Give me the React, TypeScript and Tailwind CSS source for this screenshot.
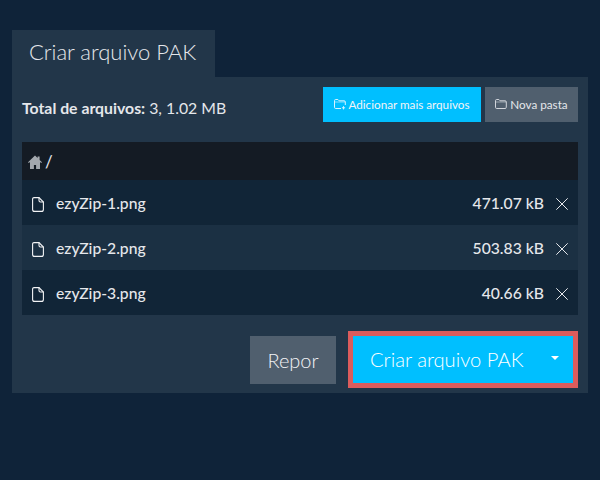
import React from "react";

const font = { fontFamily: "Lato, sans-serif" };

function FileIcon() {
  return (
    <svg width="12" height="15" viewBox="0 0 12 15" fill="none" stroke="#f3f4f6" strokeWidth="1.1" className="shrink-0">
      <path d="M2 0.6h5l4.4 4.4v7.4a2 2 0 0 1-2 2H2.6a2 2 0 0 1-2-2V2a1.4 1.4 0 0 1 1.4-1.4z" />
      <path d="M7 0.6v2.9a1.5 1.5 0 0 0 1.5 1.5h2.9" />
    </svg>
  );
}

function CloseIcon() {
  return (
    <svg width="12" height="12" viewBox="0 0 12 12" stroke="#e5e7eb" strokeWidth="1" fill="none" className="shrink-0">
      <path d="M0.3 0.3l11.4 11.4M11.7 0.3L0.3 11.7" />
    </svg>
  );
}

function FolderIcon({ plus, stroke }: { plus?: boolean; stroke: string }) {
  return (
    <svg width="12" height="11" viewBox="0 0 12 11" fill="none" stroke={stroke} strokeWidth="1" className="shrink-0">
      {plus ? (
        <path d="M7 9.5H1.7a1.2 1.2 0 0 1-1.2-1.2V1.7A1.2 1.2 0 0 1 1.7.5h2.2l1.2 1.3h5a1.2 1.2 0 0 1 1.2 1.2v3" />
      ) : (
        <path d="M1.7.5h2.2l1.2 1.3h5a1.2 1.2 0 0 1 1.2 1.2v5.3a1.2 1.2 0 0 1-1.2 1.2H1.7A1.2 1.2 0 0 1 .5 8.3V1.7A1.2 1.2 0 0 1 1.7.5z" />
      )}
      <path d="M.8 3h10.4" opacity="0.6" />
      {plus && <path d="M9.5 7.2v3.2M7.9 8.8h3.2" />}
    </svg>
  );
}

function HomeIcon() {
  return (
    <svg width="14" height="14" viewBox="0 0 14 14" fill="#a3a8ae" className="shrink-0">
      <path d="M7 0.5L0 7.2l.8.9L2 7.1V14h3.9v-4h2.2v4H12V7.1l1.2 1 .8-.9-2.4-2.3V1.5H9.6V3z" />
    </svg>
  );
}

function Row({ name, size, alt }: { name: string; size: string; alt?: boolean }) {
  return (
    <div className={`flex h-[45px] items-center pl-[10px] pr-[10px] pt-[3px] ${alt ? "bg-[#1b3043]" : "bg-[#112537]"}`}>
      <FileIcon />
      <span className="ml-[12px] flex-1 text-[15.7px] font-medium text-[#e5e7eb]">{name}</span>
      <span className="text-[15.7px] font-medium text-[#e5e7eb]">{size}</span>
      <span className="ml-[12px]"><CloseIcon /></span>
    </div>
  );
}

export default function App() {
  return (
    <div className="min-h-[480px] bg-[#0f2339] px-3 pt-[30px]" style={font}>
      <div className="flex h-[47px] w-[203px] items-center bg-[#223649] pb-[5px] pl-[17px] text-[22px] font-light text-[#e5e7eb]">
        Criar arquivo PAK
      </div>
      <div className="h-[316px] bg-[#223649] px-[10px]">
        <div className="flex h-[65px] items-start justify-between pt-[10px]">
          <div className="mt-[9px] text-[15.8px] text-[#e5e7eb]">
            <span className="font-bold">Total de arquivos:</span> 3, 1.02 MB
          </div>
          <div className="flex gap-1">
            <div className="flex h-[35px] w-[158px] items-center justify-center gap-[2px] bg-[#00bfff] text-[11.7px] text-[#f3f4f6]">
              <FolderIcon plus stroke="#d9f4ff" />
              Adicionar mais arquivos
            </div>
            <div className="flex h-[35px] w-[93px] items-center justify-center gap-[3px] bg-[#505f6e] text-[11.7px] text-[#e5e7eb]">
              <FolderIcon stroke="#d1d5db" />
              Nova pasta
            </div>
          </div>
        </div>
        <div>
          <div className="flex h-[38px] items-center gap-[3px] bg-[#141b24] pl-[6px] pt-[2px] text-[17px] text-[#e5e7eb]">
            <HomeIcon />
            <span>/</span>
          </div>
          <Row name="ezyZip-1.png" size="471.07 kB" />
          <Row name="ezyZip-2.png" size="503.83 kB" alt />
          <Row name="ezyZip-3.png" size="40.66 kB" />
        </div>
        <div className="mt-4 flex items-start justify-end gap-3">
          <div className="mt-[5px] flex h-[48px] w-[86px] items-center justify-center bg-[#505f6e] text-[20px] font-light text-[#f3f4f6]">
            Repor
          </div>
          <div className="flex h-[57px] w-[230px] items-center border-[5px] border-[#db5c5c] bg-[#00bfff] pl-[17px] pr-[14px] pb-[1px] text-[20.2px] font-light text-white">
            <span className="flex-1">Criar arquivo PAK</span>
            <span className="mb-[2px] h-0 w-0 border-x-[4px] border-t-[4px] border-x-transparent border-t-white" />
          </div>
        </div>
      </div>
    </div>
  );
}
